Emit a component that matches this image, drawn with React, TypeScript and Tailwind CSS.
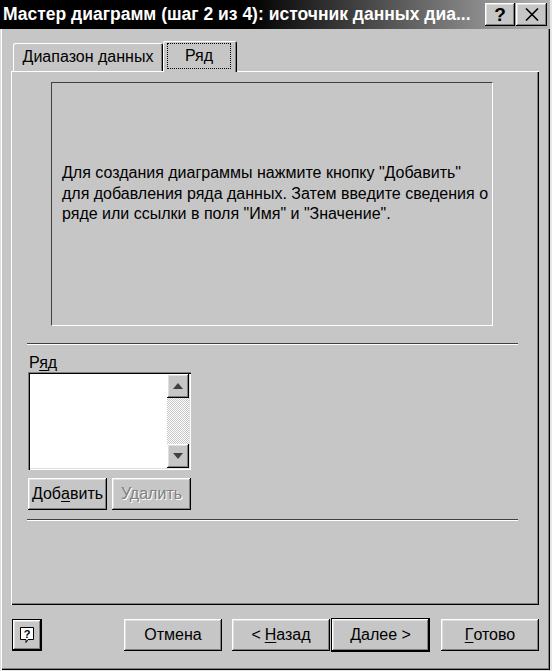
const raised =
  "shadow-[inset_-1px_-1px_#000,inset_1px_1px_#fff,inset_-2px_-2px_#808080,inset_2px_2px_#dfdfdf]";

function Btn({ children, className = "", disabled = false }: { children: React.ReactNode; className?: string; disabled?: boolean }) {
  return (
    <div
      className={`h-[32px] flex items-center justify-center bg-[#c6c6c6] text-[16px] ${raised} ${className} ${
        disabled ? "text-[#808080] [text-shadow:1px_1px_0_#fff]" : "text-black"
      }`}
    >
      {children}
    </div>
  );
}

function Arrow({ up }: { up?: boolean }) {
  return (
    <svg width="10" height="6" viewBox="0 0 10 6">
      <path d={up ? "M0 6 L5 0 L10 6 Z" : "M0 0 L5 6 L10 0 Z"} fill="#404040" />
    </svg>
  );
}

export default function App() {
  return (
    <div className="w-[552px] h-[671px] bg-[#e6e6e6] font-['Liberation_Sans',Arial,sans-serif]">
      <div className="w-[550px] h-[670px] bg-[#c6c6c6] flex flex-col shadow-[inset_1px_0_#dfdfdf,inset_2px_0_#fff,inset_-1px_-1px_#000,inset_-2px_-2px_#808080]">
        {/* title bar */}
        <div className="h-[29px] flex items-center bg-[linear-gradient(to_right,#000_0%,#000_45%,#b4b4b4_100%)] pl-[3px] pr-[3px]">
          <span className="text-white font-bold text-[17.5px] leading-none whitespace-nowrap">
            Мастер диаграмм (шаг 2 из 4): источник данных диа...
          </span>
          <div className="ml-auto flex gap-[1px]">
            <div className={`w-[30px] h-[23px] bg-[#c6c6c6] flex items-center justify-center ${raised}`}>
              <span className="font-bold text-[19px] leading-none text-black">?</span>
            </div>
            <div className={`w-[31px] h-[23px] bg-[#c6c6c6] flex items-center justify-center ${raised}`}>
              <svg width="14" height="13" viewBox="0 0 14 13">
                <path d="M1 0.5 L13 12.5 M13 0.5 L1 12.5" stroke="#000" strokeWidth="1.6" />
              </svg>
            </div>
          </div>
        </div>

        {/* body */}
        <div className="pl-[11px] pt-[12px] flex flex-col">
          {/* tabs */}
          <div className="flex items-end h-[30px]">
            <div className="ml-[2px] w-[150px] h-[28px] flex items-center justify-center text-[16px] rounded-t-[2px] shadow-[inset_1px_1px_#fff,inset_-1px_0_#000,inset_-2px_0_#808080]">
              Диапазон данных
            </div>
            <div className="relative z-10 -mb-[1px] w-[74px] h-[31px] bg-[#c6c6c6] rounded-t-[2px] pt-[2px] pl-[4px] pr-[6px] pb-[3px] shadow-[inset_1px_1px_#fff,inset_-1px_0_#000,inset_-2px_0_#808080]">
              <div className="w-full h-full border border-dotted border-black flex items-center justify-center text-[16px]">
                Ряд
              </div>
            </div>
          </div>

          {/* panel */}
          <div className="w-[528px] h-[534px] flex flex-col shadow-[inset_1px_1px_#fff,inset_-1px_-1px_#000,inset_-2px_-2px_#808080]">
            <div className="mt-[11px] ml-[40px] w-[442px] h-[244px] border border-t-[#404040] border-l-[#404040] border-b-white border-r-white pl-[10px] pt-[80px] text-[16px] leading-[20.5px]">
              Для создания диаграммы нажмите кнопку "Добавить"
              <br />
              для добавления ряда данных. Затем введите сведения о
              <br />
              ряде или ссылки в поля "Имя" и "Значение".
            </div>

            <div className="mt-[17px] ml-[16px] w-[491px] h-[2px] border-t border-t-[#404040] border-b border-b-white" />

            <div className="ml-[17px] flex flex-col">
              <div className="mt-[9px] h-[18px] leading-[18px] text-[16px] pl-[1px]">
                Р<span className="underline underline-offset-2">я</span>д
              </div>
              <div className="w-[163px] h-[98px] bg-white p-[2px] flex shadow-[inset_1px_1px_#808080,inset_2px_2px_#000,inset_-1px_-1px_#fff,inset_-2px_-2px_#dfdfdf]">
                <div className="flex-1" />
                <div className="w-[22px] flex flex-col bg-[repeating-conic-gradient(#c6c6c6_0_25%,#fff_0_50%)] bg-[length:2px_2px]">
                  <div className={`h-[24px] bg-[#c6c6c6] flex items-center justify-center ${raised}`}>
                    <Arrow up />
                  </div>
                  <div className="flex-1" />
                  <div className={`h-[24px] bg-[#c6c6c6] flex items-center justify-center ${raised}`}>
                    <Arrow />
                  </div>
                </div>
              </div>
              <div className="mt-[8px] flex gap-[5px]">
                <Btn className="w-[79px]">
                  Доб<span className="underline underline-offset-2">а</span>вить
                </Btn>
                <Btn className="w-[79px]" disabled>
                  Удалить
                </Btn>
              </div>
            </div>

            <div className="mt-[9px] ml-[16px] w-[491px] h-[2px] border-t border-t-[#404040] border-b border-b-white" />
          </div>

          {/* bottom buttons */}
          <div className="mt-[13px] flex items-center">
            <div className={`ml-[1px] w-[30px] h-[32px] border border-black flex items-center justify-center bg-[#c6c6c6] ${raised}`}>
              <svg width="14" height="17" viewBox="0 0 14 17">
                <path d="M0.5 0.5 H13.5 V12.5 H8 L6 15.5 V12.5 H0.5 Z" fill="#fff" stroke="#000" />
                <text x="7" y="10.5" textAnchor="middle" fontSize="11" fontWeight="bold" fontFamily="Liberation Sans, Arial, sans-serif" fill="#000">
                  ?
                </text>
              </svg>
            </div>
            <Btn className="ml-[82px] w-[98px]">Отмена</Btn>
            <Btn className="ml-[10px] w-[98px]">
              &lt; <span className="underline underline-offset-2 ml-[4px]">Н</span>азад
            </Btn>
            <div className="ml-[1px] w-[99px] h-[34px] border border-black">
              <Btn className="w-full h-[32px]">
                <span className="underline underline-offset-2">Д</span>алее &gt;
              </Btn>
            </div>
            <Btn className="ml-[11px] w-[98px]">
              <span className="underline underline-offset-2">Г</span>отово
            </Btn>
          </div>
        </div>
      </div>
    </div>
  );
}
